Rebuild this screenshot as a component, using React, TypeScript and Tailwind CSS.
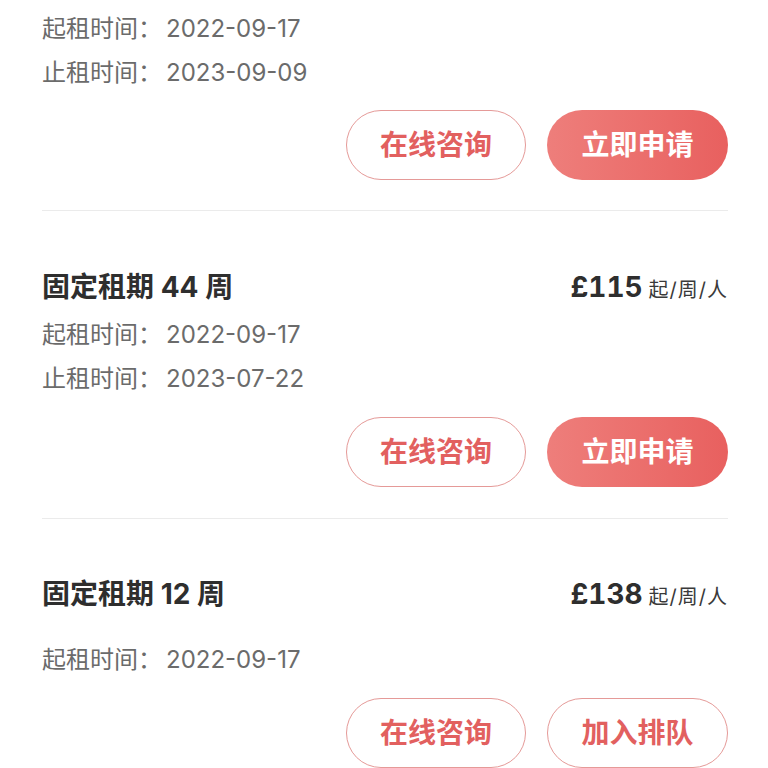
import React from "react";

interface IPlan {
  title?: string;
  price?: string;
  start: string;
  end?: string;
  full?: boolean;
  topGap: string;
  titleGap: string;
  btnGap: string;
  bottomGap: string;
}

const plans: IPlan[] = [
  {
    start: "2022-09-17",
    end: "2023-09-09",
    topGap: "pt-[7px]",
    titleGap: "",
    btnGap: "mt-[15px]",
    bottomGap: "pb-[30px]",
  },
  {
    title: "固定租期 44 周",
    price: "£115",
    start: "2022-09-17",
    end: "2023-07-22",
    topGap: "pt-[54px]",
    titleGap: "mt-[4px]",
    btnGap: "mt-[16px]",
    bottomGap: "pb-[31px]",
  },
  {
    title: "固定租期 12 周",
    price: "£138",
    start: "2022-09-17",
    full: true,
    topGap: "pt-[53px]",
    titleGap: "mt-[22px]",
    btnGap: "mt-[16px]",
    bottomGap: "",
  },
];

const font = {
  fontFamily: '"Inter", "Noto Sans CJK SC", sans-serif',
};

const PlanBlock = ({ plan, last }: { plan: IPlan; last: boolean }) => {
  return (
    <div
      className={`${plan.topGap} ${plan.bottomGap} ${
        last ? "" : "border-b border-[#ebebeb]"
      }`}
    >
      {plan.title && (
        <div className="flex items-baseline justify-between h-[44px] leading-[44px]">
          <h3 className="text-[28px] font-bold text-[#2e2e2e]">{plan.title}</h3>
          <p className="flex items-baseline">
            <span className="text-[28px] font-bold tabular-nums text-[#2e2e2e]">
              {plan.price}
            </span>
            <span className="ml-[6px] text-[20px] tracking-[1px] text-[#3a3a3a]">
              起/周/人
            </span>
          </p>
        </div>
      )}
      <div className={`${plan.titleGap} text-[24px] leading-[44px] text-[#6b6b6b]`}>
        <p>
          起租时间：<span className="ml-[4px]">{plan.start}</span>
        </p>
        {plan.end && (
          <p>
            止租时间：<span className="ml-[4px]">{plan.end}</span>
          </p>
        )}
      </div>
      <div className={`flex justify-end gap-[21px] ${plan.btnGap}`}>
        <button className="w-[180px] h-[70px] rounded-full border border-[#e59a98] text-[28px] font-bold text-[#e2605f] bg-white">
          在线咨询
        </button>
        {plan.full ? (
          <button className="w-[181px] h-[70px] rounded-full border border-[#e59a98] text-[28px] font-bold text-[#e2605f] bg-white">
            加入排队
          </button>
        ) : (
          <button className="w-[181px] h-[70px] rounded-full bg-gradient-to-r from-[#ee7e7b] to-[#e8605f] text-[28px] font-bold text-white">
            立即申请
          </button>
        )}
      </div>
    </div>
  );
};

export default function App() {
  return (
    <div
      className="w-[768px] h-[768px] overflow-hidden bg-white pl-[42px] pr-[40px]"
      style={font}
    >
      {plans.map((plan, i) => (
        <PlanBlock plan={plan} last={i === plans.length - 1} key={i} />
      ))}
    </div>
  );
}
